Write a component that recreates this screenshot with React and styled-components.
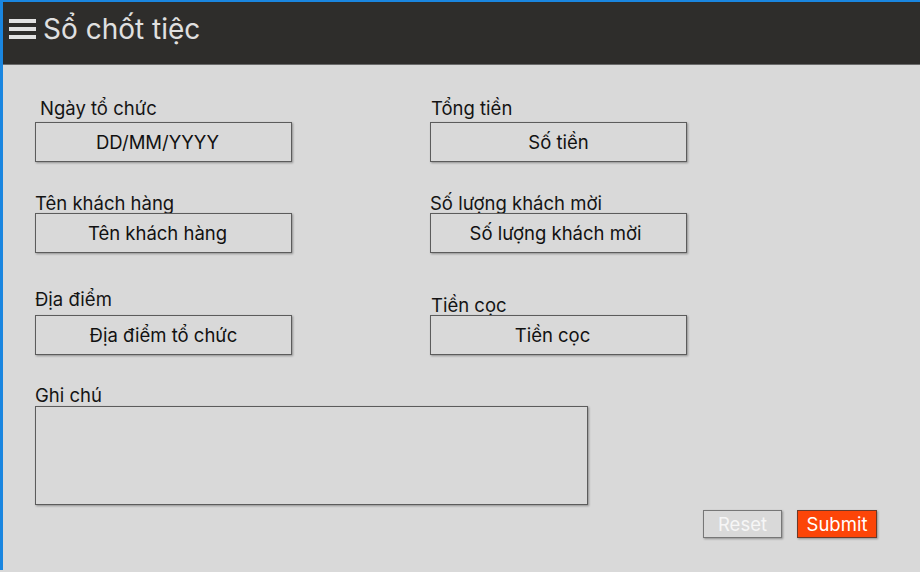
import React from 'react';
import styled, { createGlobalStyle } from 'styled-components';

const GlobalStyle = createGlobalStyle`
  html, body {
    margin: 0;
    padding: 0;
    background: #d9d9d9;
  }
  body {
    font-family: Inter, "Noto Sans", "Liberation Sans", sans-serif;
  }
`;

const Frame = styled.div`
  border-left: 3px solid #1a86e0;
  border-top: 2px solid #1a86e0;
  background: #d9d9d9;
  height: 570px;
  box-sizing: border-box;
  width: 920px;
`;

const Header = styled.header`
  align-items: center;
  background: #2e2d2b;
  border-bottom: 1px solid #6a6a6a;
  box-sizing: border-box;
  display: flex;
  gap: 7px;
  height: 63px;
  padding: 0 0 9px 6px;
`;

const MenuIcon = styled.div`
  display: flex;
  flex-direction: column;
  gap: 4px;
  width: 27px;
  span {
    background: #e2e2e2;
    display: block;
    height: 4px;
  }
`;

const Title = styled.h1`
  color: #e0e0e0;
  font-size: 28px;
  font-weight: 400;
  margin: 0;
`;

const Content = styled.main`
  padding-left: 32px;
`;

const Row = styled.div`
  align-items: flex-end;
  display: flex;
  gap: 138px;
  margin-top: ${(p) => p.$top}px;
`;

const Field = styled.div`
  display: flex;
  flex-direction: column;
  gap: ${(p) => p.$gap || 0}px;
  margin-top: ${(p) => p.$top || 0}px;
`;

const Label = styled.label`
  color: #141414;
  font-size: 18.5px;
  line-height: 20px;
  padding-left: ${(p) => p.$indent || 0}px;
`;

const Input = styled.div`
  align-items: center;
  background: #d9d9d9;
  border: 1px solid #5c5c5c;
  box-shadow: 1px 1px 2px rgba(0, 0, 0, 0.35);
  box-sizing: border-box;
  color: #111;
  display: flex;
  font-size: 18.5px;
  height: 40px;
  justify-content: center;
  padding-right: ${(p) => p.$shift || 0}px;
  width: 257px;
`;

const NoteArea = styled.div`
  background: #d9d9d9;
  border: 1px solid #5c5c5c;
  box-shadow: 1px 1px 2px rgba(0, 0, 0, 0.35);
  box-sizing: border-box;
  height: 99px;
  width: 553px;
`;

const Actions = styled.div`
  display: flex;
  gap: 15px;
  justify-content: flex-end;
  margin-top: 5px;
  padding-right: 43px;
`;

const Button = styled.button`
  background: ${(p) => (p.$primary ? '#fc4508' : '#d9d9d9')};
  border: 1px solid ${(p) => (p.$primary ? '#6b3a2a' : '#777')};
  box-shadow: 1px 1px 2px rgba(0, 0, 0, 0.35);
  color: ${(p) => (p.$primary ? '#fff' : '#f6f6f6')};
  font-family: inherit;
  font-size: 18.5px;
  height: 28px;
  padding: 0;
  width: ${(p) => p.$w}px;
`;

const FormField = ({ label, value, gap, indent, shift }) => (
  <Field $gap={gap}>
    <Label $indent={indent}>{label}</Label>
    <Input $shift={shift}>{value}</Input>
  </Field>
);

const App = () => (
  <Frame>
    <GlobalStyle />
    <Header>
      <MenuIcon>
        <span />
        <span />
        <span />
      </MenuIcon>
      <Title>Sổ chốt tiệc</Title>
    </Header>
    <Content>
      <Row $top={33}>
        <FormField label="Ngày tổ chức" value="DD/MM/YYYY" gap={4} indent={5} shift={12} />
        <FormField label="Tổng tiền" value="Số tiền" gap={4} indent={1} />
      </Row>
      <Row $top={31}>
        <FormField label="Tên khách hàng" value="Tên khách hàng" shift={12} />
        <FormField label="Số lượng khách mời" value="Số lượng khách mời" shift={6} />
      </Row>
      <Row $top={36}>
        <FormField label="Địa điểm" value="Địa điểm tổ chức" gap={6} />
        <FormField label="Tiền cọc" value="Tiền cọc" gap={-1} indent={1} shift={12} />
      </Row>
      <Field $gap={1} $top={30}>
        <Label>Ghi chú</Label>
        <NoteArea />
      </Field>
    </Content>
    <Actions>
      <Button $w={79}>Reset</Button>
      <Button $primary $w={80}>Submit</Button>
    </Actions>
  </Frame>
);

export default App;
